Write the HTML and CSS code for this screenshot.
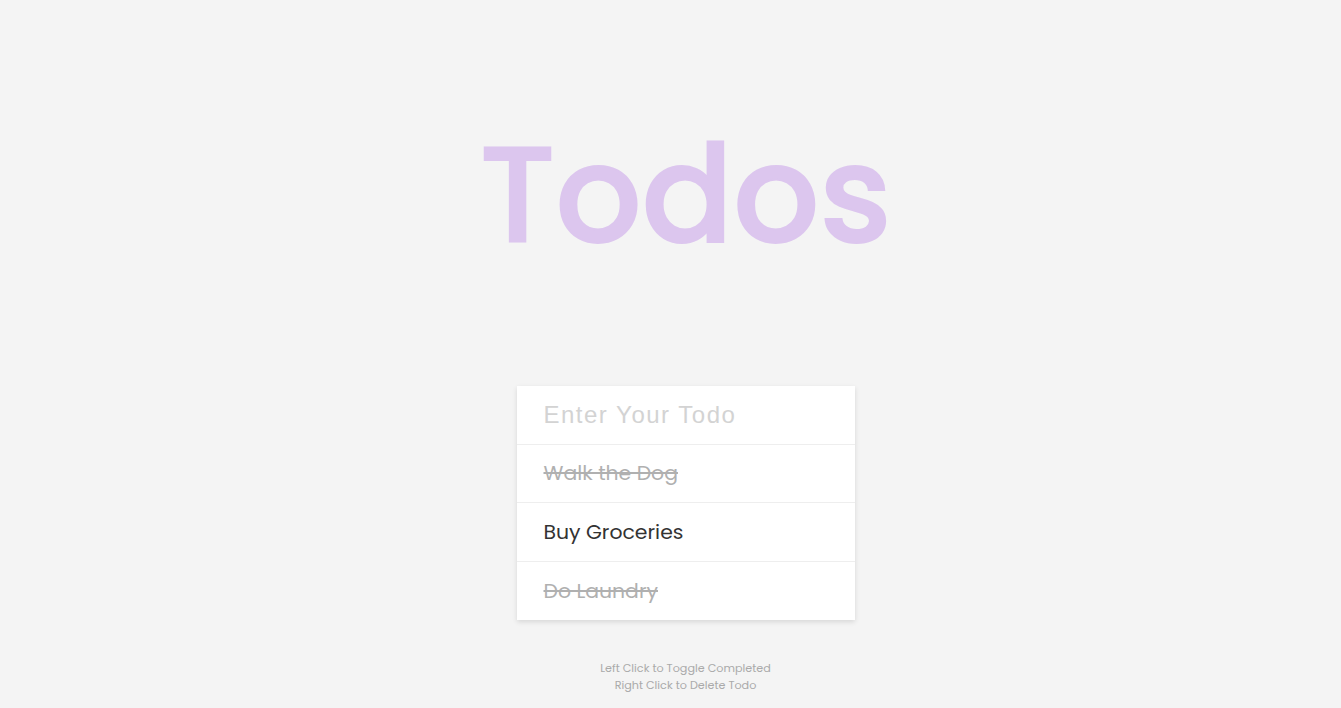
FILE: index.html
```html
<!DOCTYPE html>
<html lang="en">
<head>
<meta charset="utf-8">
<title>Todos</title>
<link rel="stylesheet" href="styles.css">
</head>
<body>
<main class="app">
  <h1 class="title">Todos</h1>
  <form class="card">
    <input class="todo-input" type="text" placeholder="Enter Your Todo">
    <ul class="todo-list">
      <li class="todo completed">Walk the Dog</li>
      <li class="todo">Buy Groceries</li>
      <li class="todo completed">Do Laundry</li>
    </ul>
  </form>
  <p class="hint">Left Click to Toggle Completed<br>Right Click to Delete Todo</p>
</main>
</body>
</html>
```

FILE: styles.css
```css
* { box-sizing: border-box; }
html, body {
  margin: 0;
  padding: 0;
  background: #f4f4f4;
  font-family: "Poppins", "Inter", "Open Sans", sans-serif;
  color: #333;
}
.app {
  display: flex;
  flex-direction: column;
  align-items: center;
  padding-top: 112px;
  padding-left: 30px;
}
.title {
  margin: 0;
  font-size: 135px;
  font-weight: 500;
  line-height: 165px;
  color: #dcc6ee;
  -webkit-text-stroke: 2px #dcc6ee;
  letter-spacing: 0;
}
.card {
  margin: 109px 0 0;
  width: 338px;
  background: #fff;
  box-shadow: 0 2px 5px rgba(0, 0, 0, 0.12);
}
.todo-input {
  display: block;
  width: 100%;
  height: 58.5px;
  border: none;
  border-bottom: 1px solid #eeeeee;
  padding: 0 27px;
  font-family: "Liberation Sans", Arial, sans-serif;
  font-size: 24px;
  letter-spacing: 1.5px;
  color: #333;
  outline: none;
  background: #fff;
}
.todo-input::placeholder { color: #d3d3d3; }
.todo-list {
  list-style: none;
  margin: 0;
  padding: 0;
}
.todo {
  height: 58.5px;
  display: flex;
  align-items: center;
  padding: 0 27px;
  font-size: 20.4px;
  color: #333;
  border-bottom: 1px solid #eeeeee;
}
.todo:last-child { border-bottom: none; }
.todo.completed {
  color: #b0b0b0;
  text-decoration: line-through;
}
.hint {
  margin: 40px 0 0;
  text-align: center;
  font-size: 11.2px;
  line-height: 17px;
  color: #aaaaaa;
}
```
